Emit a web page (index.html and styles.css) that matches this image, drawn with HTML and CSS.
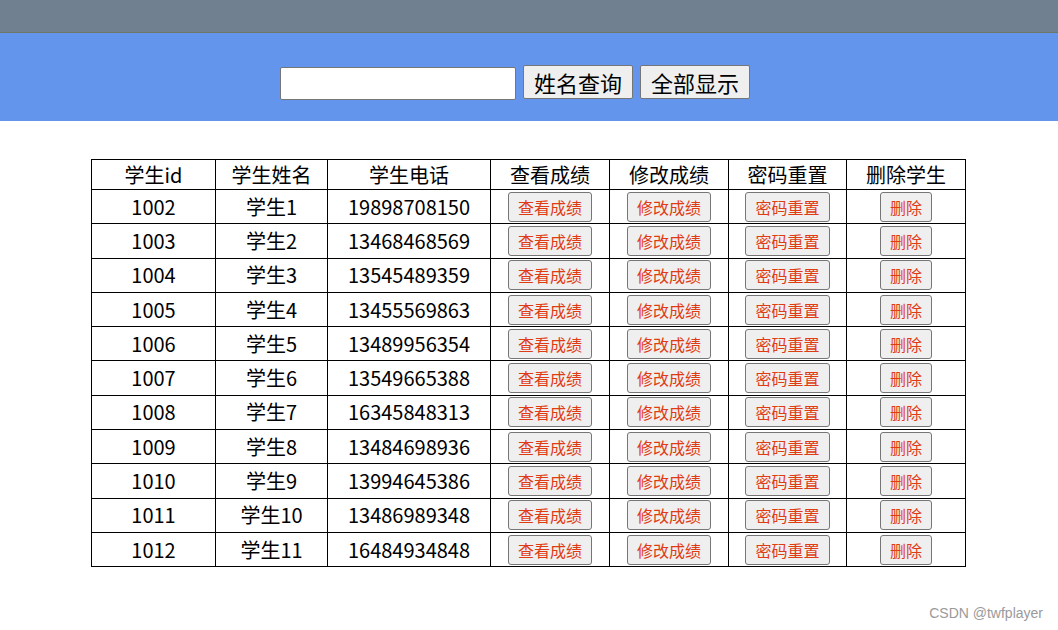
FILE: index.html
```html
<!DOCTYPE html>
<html lang="zh">
<head>
<meta charset="utf-8">
<title>学生管理</title>
<link rel="stylesheet" href="styles.css">
</head>
<body>
<div class="topbar"></div>
<div class="search">
  <input class="search-input" type="text">
  <button class="search-btn">姓名查询</button>
  <button class="search-btn">全部显示</button>
</div>
<table class="students">
  <colgroup>
    <col style="width:124px"><col style="width:112px"><col style="width:163px"><col style="width:119px"><col style="width:119px"><col style="width:118px"><col style="width:119px">
  </colgroup>
  <thead>
    <tr><th>学生id</th><th>学生姓名</th><th>学生电话</th><th>查看成绩</th><th>修改成绩</th><th>密码重置</th><th>删除学生</th></tr>
  </thead>
  <tbody id="rows">
    <tr><td>1002</td><td>学生1</td><td>19898708150</td><td><button class="act">查看成绩</button></td><td><button class="act">修改成绩</button></td><td><button class="act">密码重置</button></td><td><button class="act">删除</button></td></tr>
    <tr><td>1003</td><td>学生2</td><td>13468468569</td><td><button class="act">查看成绩</button></td><td><button class="act">修改成绩</button></td><td><button class="act">密码重置</button></td><td><button class="act">删除</button></td></tr>
    <tr><td>1004</td><td>学生3</td><td>13545489359</td><td><button class="act">查看成绩</button></td><td><button class="act">修改成绩</button></td><td><button class="act">密码重置</button></td><td><button class="act">删除</button></td></tr>
    <tr><td>1005</td><td>学生4</td><td>13455569863</td><td><button class="act">查看成绩</button></td><td><button class="act">修改成绩</button></td><td><button class="act">密码重置</button></td><td><button class="act">删除</button></td></tr>
    <tr><td>1006</td><td>学生5</td><td>13489956354</td><td><button class="act">查看成绩</button></td><td><button class="act">修改成绩</button></td><td><button class="act">密码重置</button></td><td><button class="act">删除</button></td></tr>
    <tr><td>1007</td><td>学生6</td><td>13549665388</td><td><button class="act">查看成绩</button></td><td><button class="act">修改成绩</button></td><td><button class="act">密码重置</button></td><td><button class="act">删除</button></td></tr>
    <tr><td>1008</td><td>学生7</td><td>16345848313</td><td><button class="act">查看成绩</button></td><td><button class="act">修改成绩</button></td><td><button class="act">密码重置</button></td><td><button class="act">删除</button></td></tr>
    <tr><td>1009</td><td>学生8</td><td>13484698936</td><td><button class="act">查看成绩</button></td><td><button class="act">修改成绩</button></td><td><button class="act">密码重置</button></td><td><button class="act">删除</button></td></tr>
    <tr><td>1010</td><td>学生9</td><td>13994645386</td><td><button class="act">查看成绩</button></td><td><button class="act">修改成绩</button></td><td><button class="act">密码重置</button></td><td><button class="act">删除</button></td></tr>
    <tr><td>1011</td><td>学生10</td><td>13486989348</td><td><button class="act">查看成绩</button></td><td><button class="act">修改成绩</button></td><td><button class="act">密码重置</button></td><td><button class="act">删除</button></td></tr>
    <tr><td>1012</td><td>学生11</td><td>16484934848</td><td><button class="act">查看成绩</button></td><td><button class="act">修改成绩</button></td><td><button class="act">密码重置</button></td><td><button class="act">删除</button></td></tr>
  </tbody>
</table>
<div class="watermark">CSDN @twfplayer</div>
</body>
</html>
```
FILE: styles.css
```css
html, body {
  margin: 0;
  padding: 0;
  background: #ffffff;
  font-family: "Noto Sans CJK SC", "Noto Sans", sans-serif;
}
.topbar {
  height: 33px;
  background: #708090;
  border-bottom: 1px solid #6f7767;
  box-sizing: border-box;
}
.search {
  height: 88px;
  background: #6495ed;
  display: flex;
  align-items: center;
  justify-content: center;
  gap: 7px;
  padding: 10px 28px 0 0;
  box-sizing: border-box;
}
.search-input {
  width: 236px;
  height: 33px;
  box-sizing: border-box;
  border: 1px solid #767676;
  border-radius: 2px;
  background: #fff;
  margin: 2px 0 0 0;
  padding: 0 4px;
}
.search-btn {
  height: 34px;
  box-sizing: border-box;
  font-family: "Noto Sans CJK SC", sans-serif;
  font-size: 22px;
  line-height: 1;
  padding: 0 10px;
  background: #efefef;
  border: 1px solid #767676;
  border-radius: 2px;
  color: #000;
  margin: 0;
}
.students {
  margin: 38px 0 0 91px;
  border-collapse: collapse;
  table-layout: fixed;
  width: 874px;
  font-size: 20px;
  color: #000;
}
.students th, .students td {
  border: 1px solid #000;
  text-align: center;
  padding: 0;
  font-weight: normal;
  line-height: 1;
}
.students th {
  height: 29px;
}
.students td {
  height: 33.3px;
}
.act {
  height: 30px;
  box-sizing: border-box;
  font-family: "Noto Sans CJK SC", sans-serif;
  font-size: 16px;
  line-height: 1;
  padding: 0 9px;
  color: #e03c14;
  background: #efefef;
  border: 1px solid #767676;
  border-radius: 3px;
  vertical-align: middle;
}
.watermark {
  position: absolute;
  right: 15px;
  top: 605px;
  font-family: "Liberation Sans", Arial, sans-serif;
  font-size: 14px;
  color: #9a9a9a;
}
```
